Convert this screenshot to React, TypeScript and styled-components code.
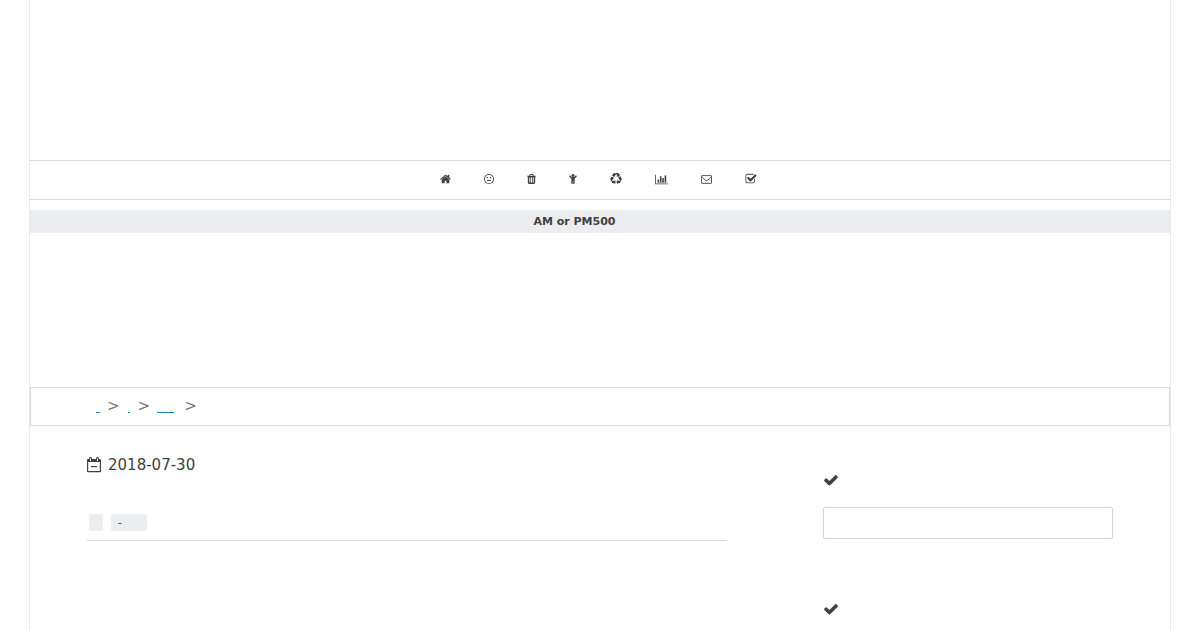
import React from "react";
import styled, { createGlobalStyle } from "styled-components";

const GlobalStyle = createGlobalStyle`
  * { box-sizing: border-box; }
  body {
    margin: 0;
    background: #fff;
    color: #404042;
    font-family: "DejaVu Sans", sans-serif;
    font-size: 11px;
  }
`;

const Page = styled.div`
  min-height: 100vh;
  margin: 0 29px;
  border: solid #e8e8e8;
  border-width: 0 1px;
`;

const Banner = styled.header`
  height: 160px;
`;

const Nav = styled.nav`
  display: flex;
  justify-content: center;
  align-items: center;
  gap: 33px;
  height: 40px;
  padding: 0 3px 2px 0;
  border: solid #dadada;
  border-width: 1px 0;
`;

const NavLink = styled.a`
  display: flex;
  color: inherit;
`;

const Icon = styled.svg<{ $w: number; $h: number }>`
  display: block;
  width: ${(p) => p.$w}px;
  height: ${(p) => p.$h}px;
  fill: currentColor;
`;

const Notice = styled.div`
  margin-top: 10px;
  padding-right: 51px;
  background: #ebedf1;
  font-weight: bold;
  line-height: 23px;
  text-align: center;
`;

const AdSpace = styled.div`
  height: 154px;
`;

const Breadcrumb = styled.nav`
  display: flex;
  align-items: center;
  gap: 7px;
  height: 39px;
  padding: 0 65px 1px;
  border: 1px solid #dadada;
  color: #777;
  font-size: 15px;
`;

const Crumb = styled.a<{ $width: number; $before?: number; $after?: number }>`
  width: ${(p) => p.$width}px;
  height: 13px;
  margin: 0 ${(p) => p.$after ?? 0}px 0 ${(p) => p.$before ?? 0}px;
  border-bottom: 1px solid #1b7fa8;
`;

const Columns = styled.div`
  display: grid;
  grid-template-columns: minmax(0, 1fr) 290px;
  gap: 96px;
  padding: 0 57px;
`;

const Article = styled.main`
  padding-top: 29px;
`;

const DateLine = styled.div`
  display: flex;
  align-items: center;
  gap: 7px;
  font-size: 15px;
  line-height: 20px;
`;

const Tags = styled.div`
  display: flex;
  gap: 8px;
  margin-top: 39px;
  padding: 0 2px 9px;
  border-bottom: 1px solid #dadada;
`;

const Tag = styled.span`
  min-width: 14px;
  height: 17px;
  padding: 0 7px;
  border-radius: 2px;
  background: #ebedf1;
  font-size: 10px;
  line-height: 17px;
`;

const WideTag = styled(Tag)`
  width: 36px;
`;

const Sidebar = styled.aside`
  padding-top: 45px;
`;

const Heading = styled.h2`
  display: flex;
  align-items: center;
  height: 17px;
  margin: 0;
`;

const SearchInput = styled.input`
  display: block;
  width: 100%;
  height: 32px;
  margin: 19px 0 61px;
  padding: 0 8px;
  border: 1px solid #d4d4d4;
  border-radius: 2px;
  background: #fff;
  font: inherit;
`;

const CheckIcon = () => (
  <Icon $w={16} $h={16} viewBox="0 0 1792 1792" aria-hidden="true">
    <path d="M1671 566q0 40-28 68l-724 724-136 136q-28 28-68 28t-68-28l-136-136-362-362q-28-28-28-68t28-68l136-136q28-28 68-28t68 28l294 295 656-657q28-28 68-28t68 28l136 136q28 28 28 68z" />
  </Icon>
);

const navItems = [
  {
    label: "Home",
    icon: (
      <Icon $w={11} $h={12} viewBox="64 0 1664 1792">
        <path d="M1472 992v480q0 26-19 45t-45 19h-384v-384h-256v384h-384q-26 0-45-19t-19-45v-480q0-1 .5-3t.5-3l575-474 575 474q1 2 1 6zm223-69l-62 74q-8 9-21 11h-3q-13 0-21-7l-692-577-692 577q-12 8-24 7-13-2-21-11l-62-74q-8-10-7-23.5t11-21.5l719-599q32-26 76-26t76 26l244 204v-195q0-14 9-23t23-9h192q14 0 23 9t9 23v408l219 182q10 8 11 21.5t-7 23.5z" />
      </Icon>
    ),
  },
  {
    label: "Mood",
    icon: (
      <Icon $w={10} $h={10} viewBox="0 0 1536 1536">
        <path fillRule="evenodd" d="M768 0a768 768 0 1 1 0 1536a768 768 0 1 1 0-1536zm0 128a640 640 0 1 0 0 1280a640 640 0 1 0 0-1280z" />
        <circle cx="500" cy="576" r="112" />
        <circle cx="1036" cy="576" r="112" />
        <rect x="448" y="921" width="640" height="140" rx="64" />
      </Icon>
    ),
  },
  {
    label: "Trash",
    icon: (
      <Icon $w={9} $h={10} viewBox="0 0 1408 1536">
        <path fillRule="evenodd" d="M32 256h309l70-167q15-37 54-63t79-26h320q40 0 79 26t54 63l70 167h309q14 0 23 9t9 23v64q0 14-9 23t-23 9h-96v948q0 83-47 143.500t-113 60.500h-832q-66 0-113-58.500t-47-141.500v-952h-96q-14 0-23-9t-9-23v-64q0-14 9-23t23-9zm448 0h448l-48-117q-7-9-17-11h-317q-10 2-17 11zM360 530v780h150v-780zm269 0v780h150v-780zm269 0v780h150v-780z" />
      </Icon>
    ),
  },
  {
    label: "Children",
    icon: (
      <Icon $w={8} $h={10} viewBox="64 0 1152 1536">
        <circle cx="640" cy="224" r="224" />
        <path d="M1188 260q28 28 28 84t-28 84l-292 260v724q0 46-33 79t-79 33-79-33-33-79v-384h-64v384q0 46-33 79t-79 33-79-33-33-79v-724l-292-260q-28-28-28-84t28-84 84-28 84 28l212 210h336l212-210q28-28 84-28t84 28z" />
      </Icon>
    ),
  },
  {
    label: "Recycling",
    icon: (
      <Icon $w={12} $h={12} viewBox="0 0 1792 1792">
        <path d="M836 1169l-15 368-2 22-420-29q-36-3-67-31.5t-47-65.5q-11-27-14.5-55t4-65 12-55 21.5-64 19-53q78 12 509 28zm-387-586l180 379-147-92q-63 72-111.5 144.5t-72.5 125-39.5 94.5-18.5 63l-4 21-190-357q-17-26-18-56t6-47l8-18q35-63 114-188l-140-86zm1231 517l-188 359q-12 29-36.5 46.5t-43.5 20.5l-18 4q-71 7-219 12l8 164-230-367 211-362 7 173q170 16 283 5t170-33zm-785-924q-47 63-265 435l-317-187-19-12 225-356q20-31 60-45t80-10q24 2 48.5 12t42 21 41.5 33 36 34.5 36 39.5 32 35zm655 307l212 363q18 37 12.5 76t-27.5 74q-13 20-33 37t-38 28-48.5 22-47 16-51.5 14-46 12q-34-72-265-436l313-195zm-143-226l142-83-220 373-419-20 151-86q-34-89-75-166t-75.5-123.5-64.5-80-47-46.5l-17-13 405 1q31-3 58 10.5t39 28.5l11 15q39 61 112 190z" />
      </Icon>
    ),
  },
  {
    label: "Statistics",
    icon: (
      <Icon $w={13} $h={11} viewBox="0 0 2048 1792">
        <path d="M640 896v512h-256v-512h256zm384-512v1024h-256v-1024h256zm1024 1152v128h-2048v-1536h128v1408h1920zm-640-896v768h-256v-768h256zm384-384v1152h-256v-1152h256z" />
      </Icon>
    ),
  },
  {
    label: "Mail",
    icon: (
      <Icon $w={11} $h={9} viewBox="0 0 1792 1408">
        <g fill="none" stroke="currentColor" strokeWidth="144">
          <rect x="72" y="72" width="1648" height="1264" rx="96" />
          <path d="M72 220C190 420 430 590 650 760Q800 880 896 880T1142 760C1362 590 1602 420 1720 220" />
        </g>
      </Icon>
    ),
  },
  {
    label: "Checklist",
    icon: (
      <Icon $w={12} $h={12} viewBox="0 0 1792 1792">
        <path d="M1472 930v318q0 119-84.5 203.5t-203.5 84.5h-832q-119 0-203.5-84.5t-84.5-203.5v-832q0-119 84.5-203.5t203.5-84.5h832q63 0 117 25 15 7 18 23 3 17-9 29l-49 49q-10 10-23 10-3 0-9-2-23-6-45-6h-832q-66 0-113 47t-47 113v832q0 66 47 113t113 47h832q66 0 113-47t47-113v-254q0-13 9-22l64-64q10-10 23-10 6 0 12 3 20 8 20 29zm231-489l-814 814q-24 24-57 24t-57-24l-430-430q-24-24-24-57t24-57l110-110q24-24 57-24t57 24l263 263 647-647q24-24 57-24t57 24l110 110q24 24 24 57t-24 57z" />
      </Icon>
    ),
  },
];

export default function App() {
  return (
    <>
      <GlobalStyle />
      <Page>
        <Banner />
        <Nav>
          {navItems.map((item) => (
            <NavLink key={item.label} href="#" aria-label={item.label}>
              {item.icon}
            </NavLink>
          ))}
        </Nav>
        <Notice>AM or PM500</Notice>
        <AdSpace />
        <Breadcrumb>
          <Crumb href="#" $width={4} aria-label="Top" />
          <span>&gt;</span>
          <Crumb href="#" $width={2} $before={1} $after={1} aria-label="Section" />
          <span>&gt;</span>
          <Crumb href="#" $width={17} $after={3} aria-label="Category" />
          <span>&gt;</span>
        </Breadcrumb>
        <Columns>
          <Article>
            <DateLine>
              <Icon $w={14} $h={16} viewBox="0 0 14 16" aria-hidden="true">
                <path fillRule="evenodd" d="M1 2h1v-.5Q2 0 3.500 0T5 1.500V2h4v-.5Q9 0 10.500 0T12 1.500V2h1q1 0 1 1v11q0 1.200-1 1.200H1q-1 0-1-1.200V3q0-1 1-1zM1.200 5v9h11.600V5zM3 1.500V4h1V1.500zM10 1.500V4h1V1.500z" />
                <rect x="4" y="9" width="6" height="1.200" />
              </Icon>
              <time dateTime="2018-07-30">2018-07-30</time>
            </DateLine>
            <Tags>
              <Tag />
              <WideTag>-</WideTag>
            </Tags>
          </Article>
          <Sidebar>
            <Heading>
              <CheckIcon />
            </Heading>
            <SearchInput type="text" aria-label="Search" />
            <Heading>
              <CheckIcon />
            </Heading>
          </Sidebar>
        </Columns>
      </Page>
    </>
  );
}
